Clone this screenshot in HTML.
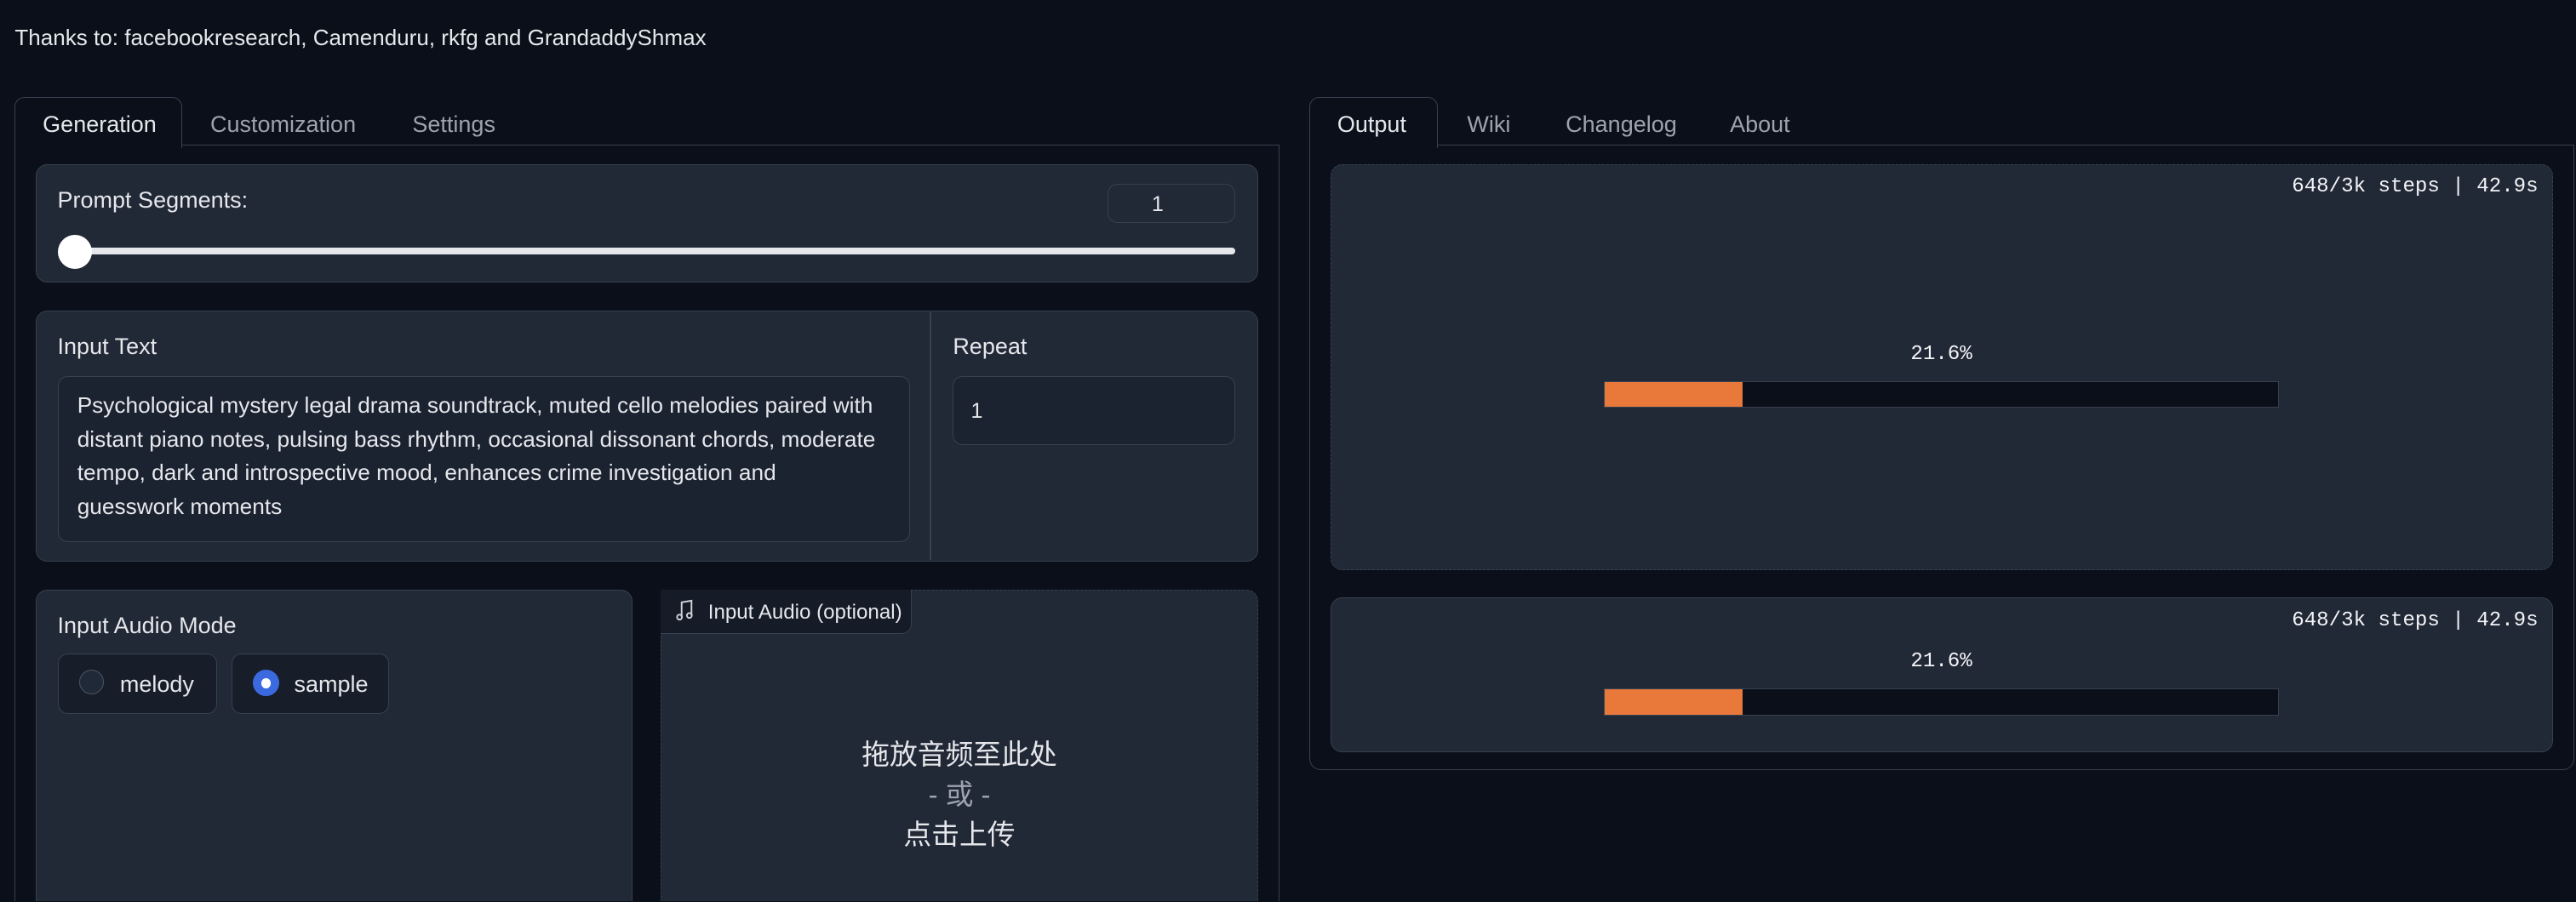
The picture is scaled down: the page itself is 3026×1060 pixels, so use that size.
<!DOCTYPE html>
<html><head><meta charset="utf-8"><style>
html,body{margin:0;padding:0;background:#0b0f19;overflow:hidden}
html{width:3026px;height:1060px}
body{width:1568px;height:549px;zoom:1.92985;position:relative;font-family:"Liberation Sans","Noto Sans CJK SC",sans-serif;color:#e5e7eb;font-size:14px;overflow:hidden}
.a{position:absolute;box-sizing:border-box}
.blk{background:#212836;border:1px solid #374151;border-radius:7px}
.dash{border-style:dashed}
.lbl{font-size:14px;color:#e5e7eb;white-space:nowrap}
.tab{font-size:14px;color:#9ca3af;white-space:nowrap}
.inp{background:#1b2230;border:1px solid #374151;border-radius:6px}
.mono{font-family:"Liberation Mono","DejaVu Sans Mono",monospace;font-size:12.5px;color:#f3f4f6;white-space:nowrap}
.bar{background:#0b0f19;border:1px solid #374151}
.fill{background:#e8793a;position:absolute;left:0;top:0;bottom:0}
</style></head><body>
<div class="a lbl" style="left:9px;top:15px;font-size:13.5px">Thanks to: facebookresearch, Camenduru, rkfg and GrandaddyShmax</div>

<div class="a" style="left:9px;top:88px;width:770px;height:461px;border:1px solid #374151;border-bottom:none"></div>
<div class="a" style="left:9px;top:59px;width:102px;height:31px;border:1px solid #374151;border-bottom:none;border-radius:6px 6px 0 0;background:#0b0f19"></div>
<div class="a lbl" style="left:26px;top:68px">Generation</div>
<div class="a tab" style="left:128px;top:68px">Customization</div>
<div class="a tab" style="left:251px;top:68px">Settings</div>

<div class="a blk" style="left:22px;top:100px;width:744px;height:72px"></div>
<div class="a lbl" style="left:35px;top:114px">Prompt Segments:</div>
<div class="a inp" style="left:674px;top:112px;width:78px;height:24px;background:#212836"></div>
<div class="a lbl" style="left:701px;top:117px;font-size:13px">1</div>
<div class="a" style="left:36px;top:151px;width:716px;height:4px;background:#e5e7eb;border-radius:2px"></div>
<div class="a" style="left:35px;top:143px;width:21px;height:21px;background:#fff;border-radius:50%"></div>

<div class="a blk" style="left:22px;top:189px;width:744px;height:153px"></div>
<div class="a" style="left:566px;top:190px;width:1px;height:151px;background:#374151"></div>
<div class="a lbl" style="left:35px;top:203px">Input Text</div>
<div class="a lbl" style="left:580px;top:203px">Repeat</div>
<div class="a inp" style="left:35px;top:229px;width:519px;height:101px"></div>
<div class="a" style="left:47px;top:237px;width:488px;font-size:13.6px;line-height:20.5px;color:#e5e7eb">Psychological mystery legal drama soundtrack, muted cello melodies paired with distant piano notes, pulsing bass rhythm, occasional dissonant chords, moderate tempo, dark and introspective mood, enhances crime investigation and guesswork moments</div>
<div class="a inp" style="left:580px;top:229px;width:172px;height:42px"></div>
<div class="a lbl" style="left:591px;top:243px;font-size:13px">1</div>

<div class="a blk" style="left:22px;top:359px;width:363px;height:190px;border-bottom:none;border-radius:7px 7px 0 0"></div>
<div class="a lbl" style="left:35px;top:373px">Input Audio Mode</div>
<div class="a inp" style="left:35px;top:398px;width:97px;height:37px;background:#171d29"></div>
<div class="a" style="left:48px;top:408px;width:15px;height:15px;border:1px solid #4b5563;border-radius:50%;background:#1f2937"></div>
<div class="a lbl" style="left:73px;top:409px">melody</div>
<div class="a inp" style="left:141px;top:398px;width:96px;height:37px;background:#171d29"></div>
<div class="a" style="left:154px;top:408px;width:16px;height:16px;border-radius:50%;background:#3b6ae0"></div>
<div class="a" style="left:159px;top:413px;width:6px;height:6px;border-radius:50%;background:#fff"></div>
<div class="a lbl" style="left:179px;top:409px">sample</div>

<div class="a blk dash" style="left:402px;top:359px;width:364px;height:190px;border-bottom:none;border-radius:7px 7px 0 0"></div>
<div class="a" style="left:402px;top:359px;width:153px;height:27px;background:#151b27;border:1px solid #374151;border-top:none;border-left:none;border-radius:0 0 6px 0"></div>
<svg class="a" style="left:411px;top:365px" width="12" height="14" viewBox="0 0 12 14"><path d="M4 11V2l6-1v9" fill="none" stroke="#d1d5db" stroke-width="1"/><circle cx="2.7" cy="11" r="1.5" fill="none" stroke="#d1d5db"/><circle cx="8.7" cy="10" r="1.5" fill="none" stroke="#d1d5db"/></svg>
<div class="a lbl" style="left:431px;top:366px;font-size:12.5px">Input Audio (optional)</div>
<div class="a" style="left:402px;top:447px;width:364px;text-align:center;font-size:17px;line-height:24.5px;color:#e5e7eb">拖放音频至此处<br><span style="color:#9ca3af">- 或 -</span><br>点击上传</div>

<div class="a" style="left:797px;top:88px;width:770px;height:381px;border:1px solid #374151;border-radius:0 0 7px 7px"></div>
<div class="a" style="left:797px;top:59px;width:78px;height:31px;border:1px solid #374151;border-bottom:none;border-radius:6px 6px 0 0;background:#0b0f19"></div>
<div class="a lbl" style="left:814px;top:68px">Output</div>
<div class="a tab" style="left:893px;top:68px">Wiki</div>
<div class="a tab" style="left:953px;top:68px">Changelog</div>
<div class="a tab" style="left:1053px;top:68px">About</div>

<div class="a blk dash" style="left:810px;top:100px;width:744px;height:247px"></div>
<div class="a mono" style="right:23px;top:107px">648/3k steps | 42.9s</div>
<div class="a mono" style="left:1163px;top:209px">21.6%</div>
<div class="a bar" style="left:976px;top:232px;width:411px;height:16px"><div class="fill" style="width:84px"></div></div>

<div class="a blk" style="left:810px;top:364px;width:744px;height:94px"></div>
<div class="a mono" style="right:23px;top:371px">648/3k steps | 42.9s</div>
<div class="a mono" style="left:1163px;top:396px">21.6%</div>
<div class="a bar" style="left:976px;top:419px;width:411px;height:17px"><div class="fill" style="width:84px"></div></div>
</body></html>
